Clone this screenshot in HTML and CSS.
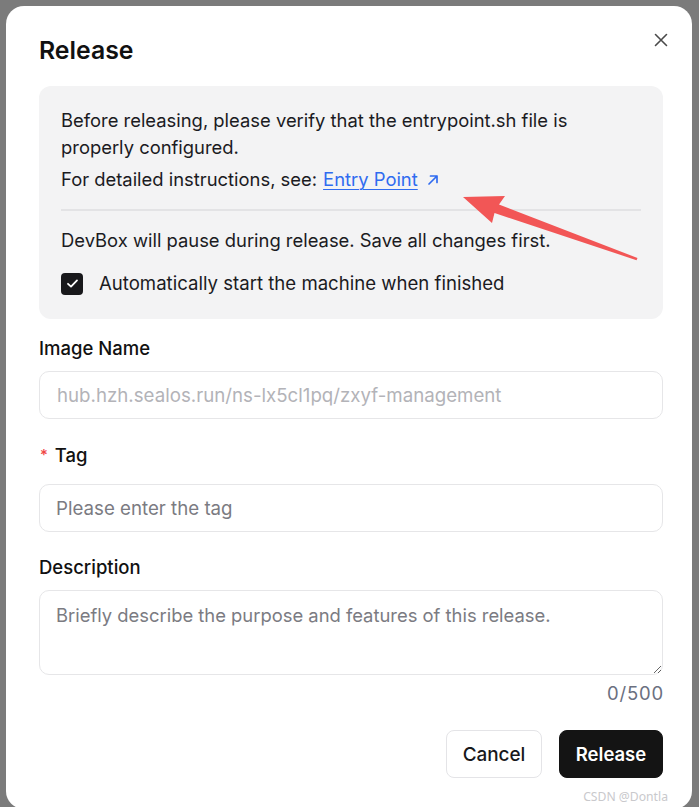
FILE: index.html
```html
<!DOCTYPE html>
<html lang="en">
<head>
<meta charset="utf-8">
<title>Release</title>
<link rel="stylesheet" href="styles.css">
</head>
<body>
<div class="backdrop">
  <div class="modal">
    <div class="modal-header">
      <h2 class="modal-title">Release</h2>
      <button class="close-btn" aria-label="Close">
        <svg width="14" height="14" viewBox="0 0 14 14"><path d="M1.5 1.5 L12.5 12.5 M12.5 1.5 L1.5 12.5" stroke="#4a4a4a" stroke-width="1.6" stroke-linecap="round"/></svg>
      </button>
    </div>

    <div class="info-box">
      <p class="info-text">Before releasing, please verify that the entrypoint.sh file is properly configured.</p>
      <p class="info-text info-link-line">For detailed instructions, see: <a class="doc-link" href="#">Entry Point</a><svg class="ext-icon" width="12" height="12" viewBox="0 0 12 12"><path d="M2 10 L10 2 M3.5 2 H10 V8.5" fill="none" stroke="#2f6bf0" stroke-width="1.7" stroke-linecap="round" stroke-linejoin="round"/></svg></p>
      <div class="divider"></div>
      <p class="info-text info-warn">DevBox will pause during release. Save all changes first.</p>
      <label class="check-row">
        <span class="checkbox">
          <svg width="13" height="13" viewBox="0 0 13 13"><path d="M2 6.8 L5 9.6 L11 3.4" fill="none" stroke="#fff" stroke-width="1.8" stroke-linecap="round" stroke-linejoin="round"/></svg>
        </span>
        <span class="check-label">Automatically start the machine when finished</span>
      </label>
    </div>

    <div class="field field-image">
      <div class="field-label">Image Name</div>
      <input class="text-input input-disabled" type="text" value="hub.hzh.sealos.run/ns-lx5cl1pq/zxyf-management" readonly>
    </div>

    <div class="field field-tag">
      <div class="field-label"><span class="req">*</span>Tag</div>
      <input class="text-input" type="text" placeholder="Please enter the tag">
    </div>

    <div class="field field-desc">
      <div class="field-label">Description</div>
      <textarea class="text-area" placeholder="Briefly describe the purpose and features of this release."></textarea>
      <div class="counter">0/500</div>
    </div>

    <div class="actions">
      <button class="btn btn-outline">Cancel</button>
      <button class="btn btn-dark">Release</button>
    </div>

    <svg class="annotation" width="699" height="807" viewBox="0 0 699 807">
      <polygon points="463,197 505,196 499,204.5 637.5,258 636.5,260.2 494.5,213 492,223" fill="#f25656"/>
    </svg>
    <div class="watermark">CSDN @Dontla</div>
  </div>
</div>
</body>
</html>
```

FILE: styles.css
```css
* { box-sizing: border-box; }
html, body {
  margin: 0;
  padding: 0;
  width: 699px;
  height: 807px;
  overflow: hidden;
  background: #7b7b7b;
  font-family: Inter, "Noto Sans", "Liberation Sans", sans-serif;
  color: #18181b;
}
.backdrop {
  padding: 6px 7px 0 6px;
  height: 807px;
}
.modal {
  position: relative;
  background: #ffffff;
  border-radius: 18px;
  height: 803px;
  padding: 0 29px 0 33px;
}
.modal-header {
  display: flex;
  justify-content: space-between;
  align-items: center;
  height: 80px;
}
.modal-title {
  margin: 0;
  font-size: 24.8px;
  font-weight: 600;
  color: #111;
  padding-top: 8px;
}
.close-btn {
  border: none;
  background: none;
  padding: 0;
  width: 20px;
  height: 20px;
  display: flex;
  align-items: center;
  justify-content: center;
  margin-right: -8px;
  margin-top: -12px;
}
.info-box {
  background: #f3f3f4;
  border-radius: 12px;
  padding: 21px 22px 22px;
}
.info-text {
  margin: 0;
  font-size: 18.4px;
  line-height: 27px;
  color: #1b1b1f;
}
.info-link-line {
  margin-top: 5px;
  display: flex;
  align-items: center;
}
.doc-link {
  color: #2f6bf0;
  text-decoration: underline;
  text-underline-offset: 3px;
  text-decoration-thickness: 1px;
  margin-left: 6px;
}
.ext-icon {
  margin-left: 9px;
  margin-top: 1px;
}
.divider {
  height: 2px;
  background: #e3e3e5;
  margin-top: 16px;
}
.info-warn {
  margin-top: 16px;
}
.check-row {
  display: flex;
  align-items: center;
  margin-top: 16px;
  gap: 16px;
}
.checkbox {
  width: 22px;
  height: 22px;
  border-radius: 4px;
  background: #18181b;
  display: flex;
  align-items: center;
  justify-content: center;
}
.check-label {
  font-size: 18.6px;
  line-height: 27px;
  color: #1b1b1f;
}
.field-label {
  font-size: 18.5px;
  font-weight: 500;
  line-height: 24px;
  color: #111;
}
.field-image { margin-top: 17px; }
.field-image .field-label { margin-bottom: 11px; }
.field-tag { margin-top: 24px; }
.field-tag .field-label { margin-bottom: 17px; }
.field-desc { margin-top: 23px; }
.field-desc .field-label { margin-bottom: 11px; }
.req {
  color: #f04444;
  font-size: 15px;
  margin-right: 7px;
  margin-left: 1px;
  vertical-align: 2px;
}
.text-input {
  display: block;
  width: 100%;
  height: 48px;
  border: 1px solid #e6e6e8;
  border-radius: 10px;
  padding: 0 16px;
  font-family: inherit;
  font-size: 18.7px;
  color: #18181b;
  background: #fff;
  outline: none;
}
.text-input::placeholder { color: #7b7b82; }
.input-disabled { color: #b3b3b8; padding-left: 17px; }
.text-area {
  display: block;
  width: 100%;
  height: 85px;
  border: 1px solid #e6e6e8;
  border-radius: 10px;
  padding: 12px 16px;
  font-family: inherit;
  font-size: 18.4px;
  line-height: 24px;
  resize: vertical;
  outline: none;
  background: #fff;
}
.text-area::placeholder { color: #7b7b82; }
.counter {
  text-align: right;
  font-size: 18.5px;
  letter-spacing: 0.8px;
  line-height: 24px;
  color: #6b7080;
  margin-top: 6px;
  margin-right: -1px;
}
.actions {
  display: flex;
  justify-content: flex-end;
  gap: 17px;
  margin-top: 25px;
}
.btn {
  height: 48px;
  border-radius: 8px;
  font-family: inherit;
  font-weight: 500;
  padding: 0;
}
.btn-outline {
  background: #fff;
  border: 1px solid #e4e4e7;
  color: #18181b;
  width: 96px;
  font-size: 18.9px;
}
.btn-dark {
  background: #141414;
  border: 1px solid #141414;
  color: #fff;
  font-weight: 600;
  width: 104px;
  font-size: 18.5px;
}
.annotation {
  position: absolute;
  left: -6px;
  top: -6px;
  pointer-events: none;
}
.watermark {
  position: absolute;
  right: 24px;
  bottom: 4px;
  font-size: 12.2px;
  color: #c9c9cc;
  font-family: "Noto Sans", sans-serif;
}
```
